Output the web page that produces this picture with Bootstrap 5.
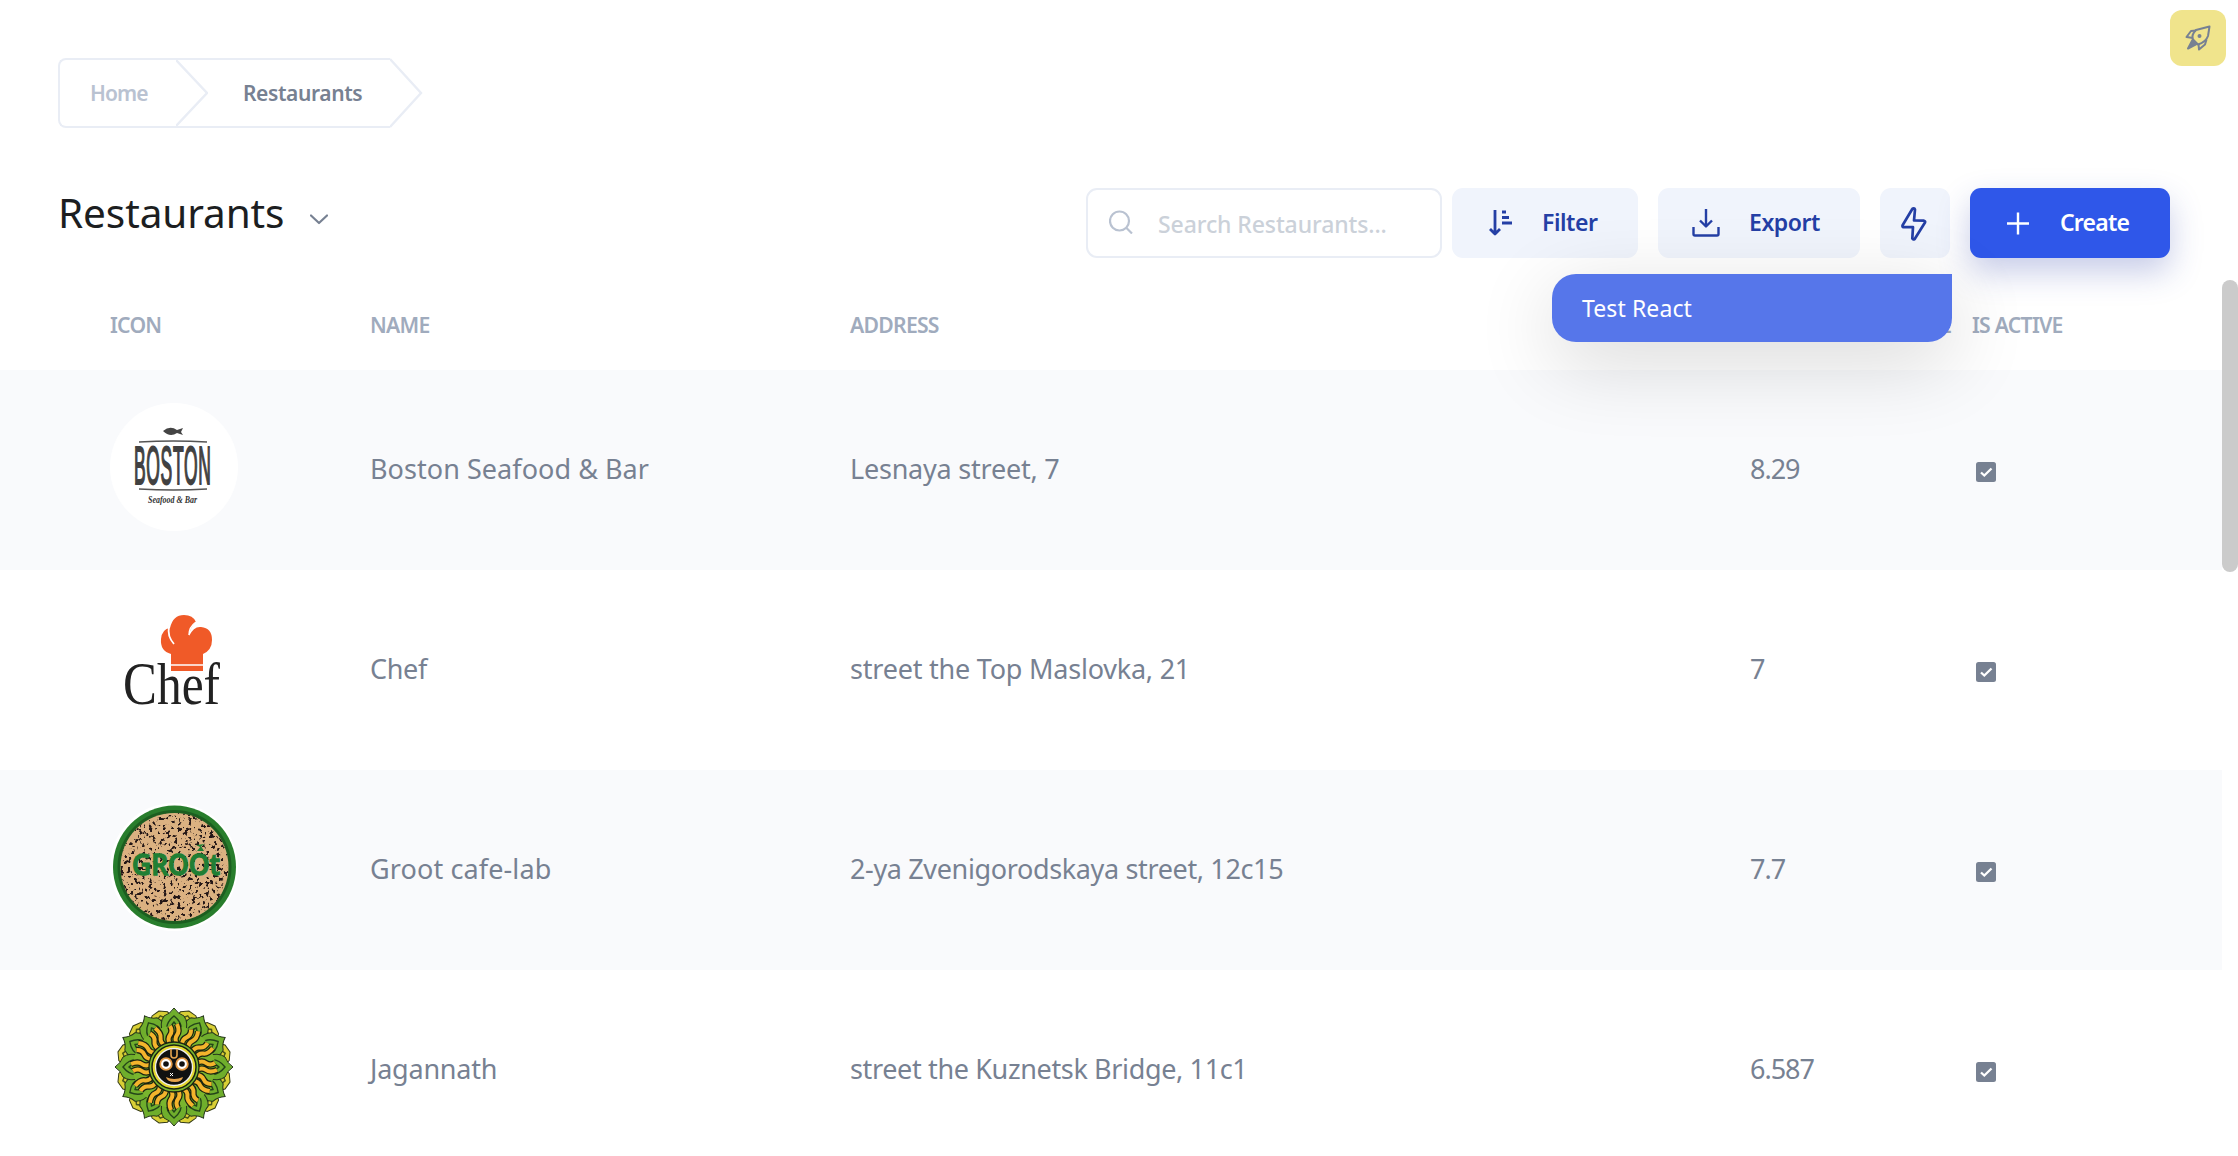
<!DOCTYPE html>
<html lang="en">
<head>
<meta charset="utf-8">
<title>Restaurants</title>
<link rel="stylesheet" href="https://cdn.jsdelivr.net/npm/bootstrap@5.3.0/dist/css/bootstrap.min.css">
<style>
body{font-family:"Noto Sans",sans-serif;color:#778192;background:#fff;height:1156px;overflow:hidden}
svg{display:block;flex:none}
.top-area{height:280px;padding:58px 68px 0 58px}
.crumbs{height:70px;margin-bottom:60px}
.crumb-box{width:332px;height:70px;border:2px solid #e9edf5;border-right:0;border-radius:8px 0 0 8px;font-size:21px;font-weight:600;line-height:28px}
.crumb-home{width:116px;padding-left:30px;color:#b9c2d1;letter-spacing:-.9px}
.crumb-now{padding-left:35px;letter-spacing:-.4px}
.bar{height:70px}
.page-title{font-size:40.5px;font-weight:400;color:#1c1e21;line-height:50px;letter-spacing:-.1px}
.title-wrap{padding-bottom:20px;gap:26px}
.title-wrap svg{margin-top:13px}
.search-box{width:356px;height:70px;border:2px solid #e9edf5;border-radius:11px;padding-left:21px;font-size:23px;font-weight:500;color:#cbd1d9;margin-right:10px}
.search-box span{margin-left:25px;letter-spacing:-.1px;padding-top:3px}
.search-box svg{margin-top:-2px}
.tool{height:70px;border:0;border-radius:11px;background:#f0f4fc;color:#243fa5;font-size:23px;font-weight:600;line-height:32px;padding:0;margin-right:20px}
.tool span{margin-top:-3px;letter-spacing:-.45px}
.tool-filter{width:186px;padding-left:37px}
.tool-filter span{margin-left:29px}
.tool-export{width:202px;padding-left:34px}
.tool-export span{margin-left:29px}
.tool-bolt{width:70px;padding:2px 3px 0 0}
.tool-create{width:200px;padding-left:36px;background:#2f57e9;color:#fff;margin-right:0;box-shadow:0 14px 32px rgba(47,65,170,.27)}
.tool-create span{margin-left:30px;letter-spacing:-.8px}
.drop{position:absolute;left:1552px;top:274px;width:400px;height:68px;background:#5676ea;color:#fff;border-radius:24px 0 24px 24px;padding:0 0 0 30px;font-size:23px;letter-spacing:.1px;box-shadow:0 20px 80px rgba(0,0,0,.16);z-index:5}
.rocket{position:absolute;left:2170px;top:10px;width:56px;height:56px;border-radius:12px;background:#f0e48c}
.thumb{position:absolute;right:0;top:280px;width:16px;height:292px;border-radius:8px;background:#cbcbcb}
.grid-table{width:2222px;table-layout:fixed;color:#778192;margin:0}
.grid-table th{height:90px;border:0;padding:0 0 1px;vertical-align:middle;font-size:21.2px;font-weight:600;color:#a0abbd;letter-spacing:-.75px}
.grid-table th.rate-head{padding-right:20px;letter-spacing:0}
.grid-table td{height:200px;border:0;padding:0 0 2px;vertical-align:middle;font-size:27px;color:#778192;white-space:nowrap;background:transparent}
.grid-table tbody tr:nth-child(odd){background:#f9fafc}
.grid-table td.logo-cell,.grid-table th.logo-cell{padding-left:110px}
.grid-table td.logo-cell{padding-bottom:6px}
.grid-table td.tick-cell{padding:3px 0 0 4px}
.ls-a{letter-spacing:.05px}.ls-b{letter-spacing:-.36px}.ls-c{letter-spacing:-.22px}.ls-d{letter-spacing:.12px}.ls-num{letter-spacing:-1px}
.w-icon{width:370px}.w-name{width:480px}.w-addr{width:900px}.w-rate{width:222px}.w-act{width:250px}
</style>
<script src="https://cdn.jsdelivr.net/npm/bootstrap@5.3.0/dist/js/bootstrap.bundle.min.js"></script>
</head>
<body class="position-relative">
<header class="top-area">
  <nav class="crumbs d-flex">
    <ol class="crumb-box list-unstyled d-flex align-items-center mb-0">
      <li class="crumb-home">Home</li>
      <li><svg width="32" height="66" viewBox="0 0 32 66" fill="none" stroke="#e9edf5" stroke-width="2.4"><path d="M0 0 31 33 0 66"/></svg></li>
      <li class="crumb-now">Restaurants</li>
    </ol>
    <svg width="34" height="70" viewBox="0 0 34 70" fill="none" stroke="#e9edf5" stroke-width="2.4"><path d="M0 1 31 35 0 69"/></svg>
  </nav>
  <div class="bar d-flex align-items-center">
    <div class="title-wrap d-flex align-items-center me-auto">
      <h1 class="page-title mb-0">Restaurants</h1>
      <svg width="18" height="11" viewBox="0 0 18 11" fill="none" stroke="#778192" stroke-width="2.200" stroke-linecap="round" stroke-linejoin="round"><path d="M1 1.5 9 9l8-7.5"/></svg>
    </div>
    <div class="search-box d-flex align-items-center">
      <svg width="24" height="24" viewBox="0 0 24 24" fill="none" stroke="#b9c2d1" stroke-width="2.200"><circle cx="10.5" cy="11" r="9.5"/><path d="m17 17.5 6 6"/></svg>
      <span>Search Restaurants...</span>
    </div>
    <button class="btn tool tool-filter d-flex align-items-center">
      <svg width="24" height="26" viewBox="0 0 24 26" fill="none" stroke="#243fa5" stroke-width="2.8"><path d="M6 0v24M1 19l5 5 5-5" stroke-linejoin="round"/><path d="M13 2h4M13 7.500h7M13 13h10"/></svg>
      <span>Filter</span>
    </button>
    <button class="btn tool tool-export d-flex align-items-center">
      <svg width="28" height="28" viewBox="0 0 28 28" fill="none" stroke="#243fa5" stroke-width="2.4" stroke-linejoin="round"><path d="M14 0v17M8 11.500l6 6 6-6M1.500 18v7q0 1.500 1.500 1.500h22q1.500 0 1.500-1.500v-7"/></svg>
      <span>Export</span>
    </button>
    <button class="btn tool tool-bolt d-flex align-items-center justify-content-center">
      <svg width="26" height="34" viewBox="0 0 26 34" fill="none" stroke="#243fa5" stroke-width="2.700" stroke-linejoin="round"><path d="M13.500 1.500Q11.500 1 11 2.500L1.600 18.200Q1 20 2.600 20.200H12L11.300 31.500Q12 33 13.700 32L24 15.500Q24.500 14 23 13.700L13 13.500 14 2.500Z"/></svg>
    </button>
    <button class="btn tool tool-create d-flex align-items-center">
      <svg width="24" height="24" viewBox="0 0 24 24" fill="none" stroke="#fff" stroke-width="2.4"><path d="M12 1.500v22M1 12.500h22"/></svg>
      <span>Create</span>
    </button>
  </div>
</header>

<table class="table table-borderless grid-table">
  <colgroup><col class="w-icon"><col class="w-name"><col class="w-addr"><col class="w-rate"><col class="w-act"></colgroup>
  <thead><tr><th class="logo-cell">ICON</th><th>NAME</th><th>ADDRESS</th><th class="rate-head text-end">RATE</th><th>IS ACTIVE</th></tr></thead>
  <tbody>
    <tr>
      <td class="logo-cell">
        <svg width="128" height="128" viewBox="0 0 128 128"><circle cx="64" cy="64" r="64" fill="#fff"/>
          <path d="M53 28q7-6 14-1l6-2-2 4 2 3-6-2q-7 5-14-2z" fill="#444"/>
          <path d="M29 39q35-2 68 0M29 86q35 2 68 0" stroke="#555" stroke-width="1.600" fill="none"/>
          <g transform="translate(24) scale(.33 1)"><text x="0" y="81.500" font-family="Liberation Sans" font-size="53" letter-spacing="2" fill="#414141" stroke="#414141" stroke-width="2">BOSTON</text></g>
          <text x="38" y="100" font-family="Liberation Serif" font-style="italic" font-weight="700" font-size="10.500" textLength="49" lengthAdjust="spacingAndGlyphs" fill="#333">Seafood &amp; Bar</text></svg>
      </td>
      <td class="ls-a">Boston Seafood &amp; Bar</td><td class="ls-c">Lesnaya street, 7</td><td class="ls-num">8.29</td>
      <td class="tick-cell"><svg width="20" height="20" viewBox="0 0 20 20"><rect width="20" height="20" rx="2.500" fill="#778192"/><path d="m5 10.500 3.300 3L15.500 6.500" fill="none" stroke="#fff" stroke-width="2.300"/></svg></td>
    </tr>
    <tr>
      <td class="logo-cell">
        <svg width="128" height="128" viewBox="0 0 128 128">
          <path d="M61 68V51q-11-3-10-15 1-10 9-11 3-13 14-13 9 0 12 7-6 5-7 14 5-10 12-9 11 1 11 13 0 10-9 14v17z" fill="#f05a28"/>
          <path d="M61 62h32" stroke="#fff" stroke-width="1.500"/><path d="M59 24q-2 9 5 17" fill="none" stroke="#fff" stroke-width="1.800"/><path d="M86 19q-7 5-7 13" fill="none" stroke="#fff" stroke-width="1.500"/>
          <text y="101" font-family="Liberation Serif" font-size="62" fill="#222" transform="translate(13) scale(.82 1)">C</text>
          <text x="47" y="101" font-family="Liberation Serif" font-size="60" textLength="63" lengthAdjust="spacingAndGlyphs" fill="#222">hef</text></svg>
      </td>
      <td class="ls-b">Chef</td><td class="ls-c">street the Top Maslovka, 21</td><td class="ls-num">7</td>
      <td class="tick-cell"><svg width="20" height="20" viewBox="0 0 20 20"><rect width="20" height="20" rx="2.500" fill="#778192"/><path d="m5 10.500 3.300 3L15.500 6.500" fill="none" stroke="#fff" stroke-width="2.300"/></svg></td>
    </tr>
    <tr>
      <td class="logo-cell">
        <svg width="128" height="128" viewBox="0 0 128 128">
          <defs><clipPath id="disc"><circle cx="64.500" cy="64" r="54"/></clipPath>
          <filter id="grain" x="0" y="0" width="100%" height="100%" color-interpolation-filters="sRGB"><feTurbulence type="fractalNoise" baseFrequency=".28" numOctaves="2" seed="4"/><feColorMatrix values="0 0 0 0 .14  0 0 0 0 .09  0 0 0 0 .09  12 0 0 0 -6.800"/></filter></defs>
          <circle cx="64" cy="64" r="64" fill="#fff"/>
          <circle cx="64.500" cy="64" r="61.500" fill="#287d2c"/><circle cx="64.500" cy="64" r="57" fill="#1c5e20"/>
          <circle cx="64.500" cy="64" r="54" fill="#dbb181"/><circle cx="64.500" cy="64" r="54" filter="url(#grain)" clip-path="url(#disc)"/>
          <text x="22" y="72" font-family="Open Sans" font-weight="600" font-size="28" textLength="88" lengthAdjust="spacingAndGlyphs" fill="#207f34" stroke="#207f34" stroke-width="1.400">GROOt</text>
          <path d="M87 48h7l-3-5zM86 42l4 2 5-3" fill="#207f34"/></svg>
      </td>
      <td class="ls-d">Groot cafe-lab</td><td class="ls-b">2-ya Zvenigorodskaya street, 12c15</td><td class="ls-num">7.7</td>
      <td class="tick-cell"><svg width="20" height="20" viewBox="0 0 20 20"><rect width="20" height="20" rx="2.500" fill="#778192"/><path d="m5 10.500 3.300 3L15.500 6.500" fill="none" stroke="#fff" stroke-width="2.300"/></svg></td>
    </tr>
    <tr>
      <td class="logo-cell">
        <svg width="128" height="128" viewBox="-64 -64 128 128">
          <defs>
            <g id="petal"><path d="M0-59Q-4-53-10-51-15-44-11-33L0-26 11-33Q15-44 10-51 4-53 0-59Z" fill="#6fae2c" stroke="#24351a" stroke-width="1"/><path d="M-7-35Q-9-44 0-51 9-44 7-35M-3-35q-1-6 3-10 4 4 3 10" fill="none" stroke="#24451a" stroke-width="1.400"/></g>
            <g id="leaf"><path d="M0-58-8-55-13-46-10-34H10L13-46 8-55Z" fill="#d9cf35" stroke="#333a16" stroke-width="1"/><path d="M-9-46 0-53 9-46M-7-41 0-48 7-41" fill="none" stroke="#4a5818" stroke-width="1.500"/></g>
            <g id="ray"><path d="M-4-23q-3-5 0-9t0-9M3-23q-3-5 0-9t0-11" fill="none" stroke="#1b2410" stroke-width="6.500"/><path d="M-4-23q-3-5 0-9t0-9M3-23q-3-5 0-9t0-11" fill="none" stroke="#f3b42c" stroke-width="4"/></g>
            <g id="four"><use href="#petal"/><use href="#petal" transform="rotate(90)"/><use href="#petal" transform="rotate(180)"/><use href="#petal" transform="rotate(270)"/></g>
            <g id="fourleaf"><use href="#leaf"/><use href="#leaf" transform="rotate(90)"/><use href="#leaf" transform="rotate(180)"/><use href="#leaf" transform="rotate(270)"/></g>
            <g id="fourray"><use href="#ray"/><use href="#ray" transform="rotate(90)"/><use href="#ray" transform="rotate(180)"/><use href="#ray" transform="rotate(270)"/></g>
          </defs>
          <use href="#fourleaf" transform="rotate(15)"/><use href="#fourleaf" transform="rotate(45)"/><use href="#fourleaf" transform="rotate(75)"/>
          <circle r="47" fill="#192012"/>
          <use href="#four" transform="rotate(30)"/><use href="#four" transform="rotate(60)"/><use href="#four"/>
          <circle r="41" fill="#79b52e"/>
          <use href="#fourray"/><use href="#fourray" transform="rotate(30)"/><use href="#fourray" transform="rotate(60)"/>
          <circle r="25" fill="#79b52e" stroke="#1b2410" stroke-width="1.300"/><circle r="22" fill="#e5d72f" stroke="#1b2410" stroke-width="1.500"/><circle r="18.500" fill="#111" stroke="#eee" stroke-width="1.300"/>
          <g stroke="#e59a45" stroke-width="1.800"><circle cx="-8" cy="-3" r="5.800" fill="#fff"/><circle cx="8" cy="-3" r="5.800" fill="#fff"/></g><circle cx="-8" cy="-3" r="2.800" fill="#111"/><circle cx="8" cy="-3" r="2.800" fill="#111"/>
          <path d="M-3-18v6q0 3 3 3t3-3v-6" fill="none" stroke="#e5a34d" stroke-width="1.600"/><path d="m-4 6 3 3m0-3-3 3" stroke="#fff"/><path d="M-8 10q8 4 17 0-1 5-8 5-8 0-9-5z" fill="#e5a34d"/></svg>
      </td>
      <td class="ls-c">Jagannath</td><td class="ls-b">street the Kuznetsk Bridge, 11c1</td><td class="ls-num">6.587</td>
      <td class="tick-cell"><svg width="20" height="20" viewBox="0 0 20 20"><rect width="20" height="20" rx="2.500" fill="#778192"/><path d="m5 10.500 3.300 3L15.500 6.500" fill="none" stroke="#fff" stroke-width="2.300"/></svg></td>
    </tr>
  </tbody>
</table>

<div class="drop d-flex align-items-center">Test React</div>
<div class="rocket d-flex align-items-center justify-content-center">
  <svg width="26" height="26" viewBox="0 0 26 26" fill="none" stroke="#778192" stroke-width="2" stroke-linejoin="round"><path d="M24.500 1.500 11 5Q6 10 8 14.500L13 19.500Q21 17 23 11Z"/><path d="M11 5.500 6 6 1.500 12 8 13M21.500 14.500 20 19.500 14 24.500 13.500 19"/><path d="M7.500 15 3 23.500 11.500 19Z" fill="#778192"/><circle cx="14.500" cy="11" r="1" fill="#778192"/></svg>
</div>
<div class="thumb"></div>
</body>
</html>
